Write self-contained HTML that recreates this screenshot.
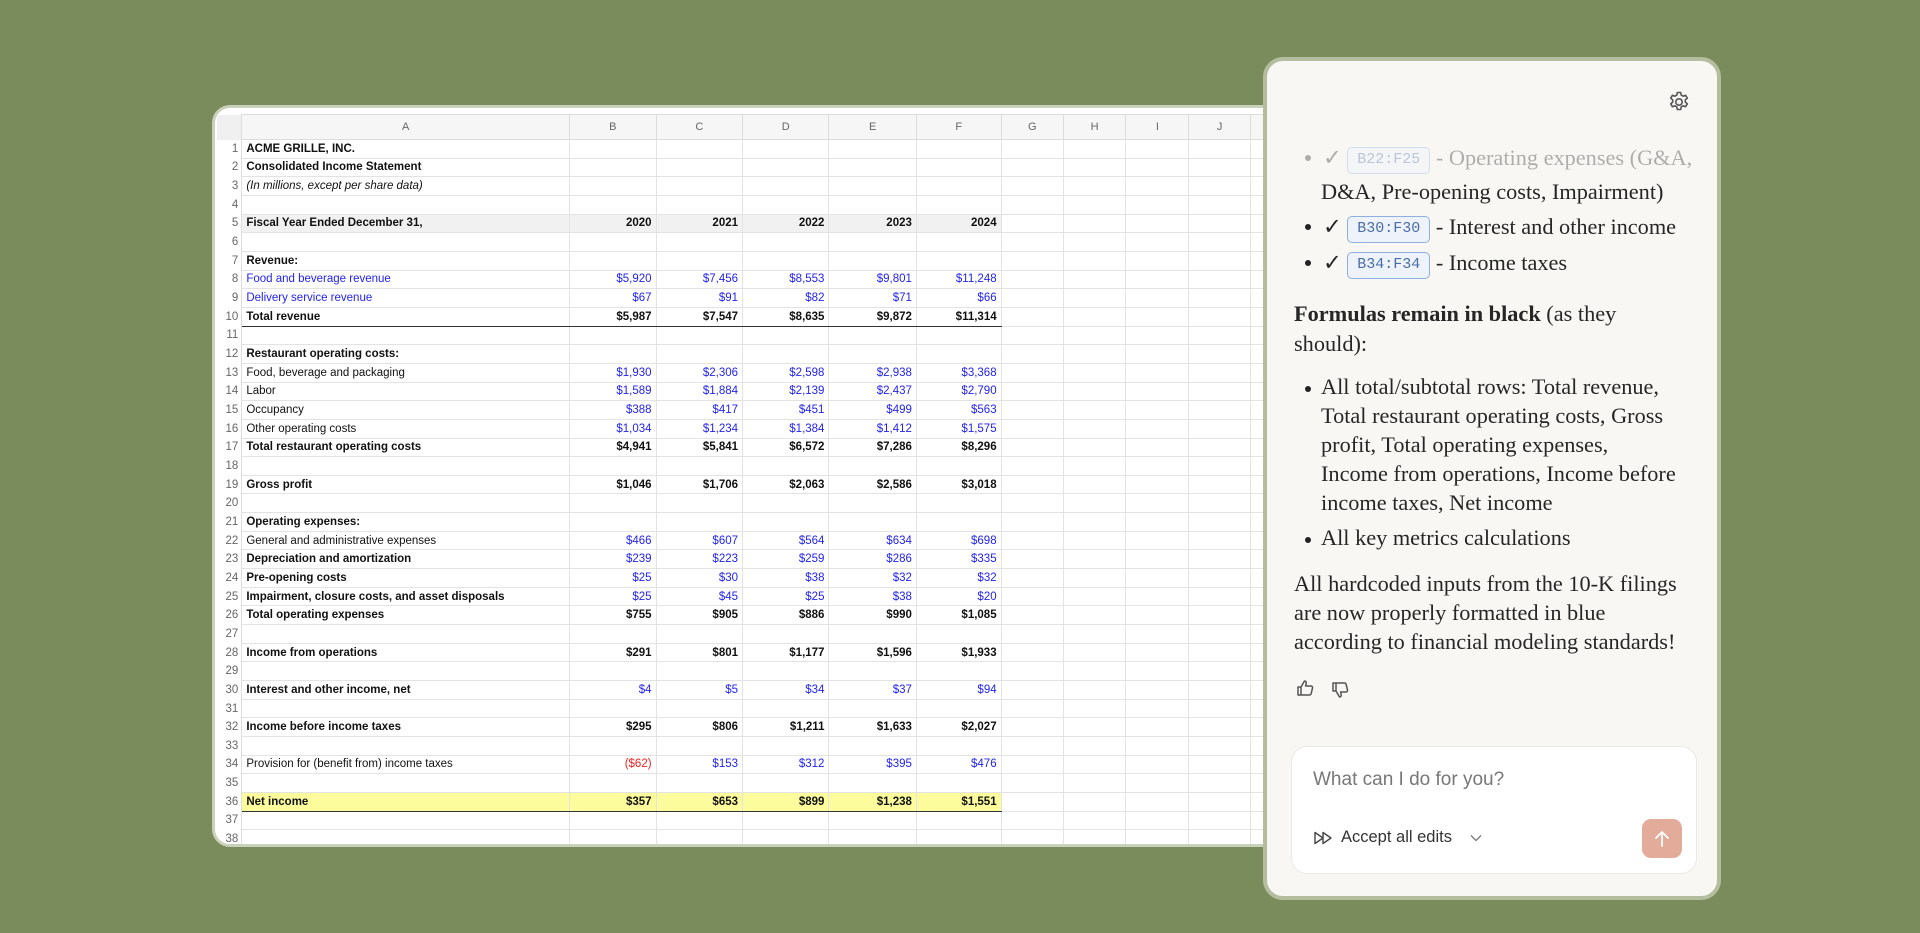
<!DOCTYPE html>
<html><head><meta charset="utf-8"><style>
*{box-sizing:border-box;margin:0;padding:0}
body{width:1920px;height:933px;background:#7b8c5c;position:relative;overflow:hidden;font-family:"Liberation Sans",sans-serif}
.card{position:absolute;left:212px;top:105px;width:1100px;height:742px;background:#fff;border-radius:18px;border:3px solid #c9d0bb;overflow:hidden}
table{position:absolute;left:2px;top:6px;border-collapse:collapse;table-layout:fixed;font-family:"Liberation Sans Narrow","Liberation Sans",sans-serif;font-size:11.5px;color:#111}
td{height:18.67px;border:1px solid #e3e3e3;padding:0 4px;white-space:nowrap;overflow:hidden;line-height:16px}
tr.h td{height:25px;background:#f6f6f6;color:#666;text-align:center;font-size:11px;border-color:#dcdcdc}
td.n{color:#666;text-align:right;padding-right:3px;background:#fff;border-left:none;border-top:none;border-bottom:none;border-right:1px solid #ddd}
td.v{text-align:right}
.b{font-weight:bold}.bl{color:#2323f0}.rd{color:#ee2222}
tr.g td:not(.n):nth-child(-n+7){background:#f1f1f1}
tr.u td:not(.n):nth-child(-n+7){border-bottom:1.5px solid #333}
tr.y td:not(.n):nth-child(-n+7){background:#fdfc9c;border-top:1.5px solid #333;border-bottom:1.5px solid #333}
.panel{position:absolute;left:1263px;top:57px;width:458px;height:843px;background:#f8f7f4;border-radius:20px;border:4px solid #b4be9f}
.s{position:absolute;font-family:"Liberation Serif",serif;font-size:22.3px;color:#262626;white-space:nowrap}
.chip{display:inline-block;font-family:"Liberation Mono",monospace;font-size:15px;color:#4a6da5;background:#eef3fb;border:1.5px solid #8fb0de;border-radius:5px;padding:0 9px;height:27px;line-height:24px;vertical-align:2px}
.dot{position:absolute;width:6px;height:6px;border-radius:3px;background:#222}
.inbox{position:absolute;left:24px;top:685px;width:406px;height:128px;background:#fff;border-radius:16px;border:1px solid #ebe9e4}
</style></head><body>
<div class="card">
<table>
<colgroup><col style="width:25px"><col style="width:330px"><col style="width:88px"><col style="width:88px"><col style="width:88px"><col style="width:89px"><col style="width:86px"><col style="width:64px"><col style="width:64px"><col style="width:65px"><col style="width:63px"><col style="width:60px"></colgroup>
<tr class="h"><td class="n" style="background:#f0f0f0"></td><td>A</td><td>B</td><td>C</td><td>D</td><td>E</td><td>F</td><td>G</td><td>H</td><td>I</td><td>J</td><td></td></tr>
<tr><td class="n">1</td><td class="b">ACME GRILLE, INC.</td><td></td><td></td><td></td><td></td><td></td><td></td><td></td><td></td><td></td><td></td></tr>
<tr><td class="n">2</td><td class="b">Consolidated Income Statement</td><td></td><td></td><td></td><td></td><td></td><td></td><td></td><td></td><td></td><td></td></tr>
<tr><td class="n">3</td><td><i>(In millions, except per share data)</i></td><td></td><td></td><td></td><td></td><td></td><td></td><td></td><td></td><td></td><td></td></tr>
<tr><td class="n">4</td><td></td><td></td><td></td><td></td><td></td><td></td><td></td><td></td><td></td><td></td><td></td></tr>
<tr class="g"><td class="n">5</td><td class="b">Fiscal Year Ended December 31,</td><td class="v b">2020</td><td class="v b">2021</td><td class="v b">2022</td><td class="v b">2023</td><td class="v b">2024</td><td></td><td></td><td></td><td></td><td></td></tr>
<tr><td class="n">6</td><td></td><td></td><td></td><td></td><td></td><td></td><td></td><td></td><td></td><td></td><td></td></tr>
<tr><td class="n">7</td><td class="b">Revenue:</td><td></td><td></td><td></td><td></td><td></td><td></td><td></td><td></td><td></td><td></td></tr>
<tr><td class="n">8</td><td class="bl">Food and beverage revenue</td><td class="v bl">$5,920</td><td class="v bl">$7,456</td><td class="v bl">$8,553</td><td class="v bl">$9,801</td><td class="v bl">$11,248</td><td></td><td></td><td></td><td></td><td></td></tr>
<tr><td class="n">9</td><td class="bl">Delivery service revenue</td><td class="v bl">$67</td><td class="v bl">$91</td><td class="v bl">$82</td><td class="v bl">$71</td><td class="v bl">$66</td><td></td><td></td><td></td><td></td><td></td></tr>
<tr class="u"><td class="n">10</td><td class="b">Total revenue</td><td class="v b">$5,987</td><td class="v b">$7,547</td><td class="v b">$8,635</td><td class="v b">$9,872</td><td class="v b">$11,314</td><td></td><td></td><td></td><td></td><td></td></tr>
<tr><td class="n">11</td><td></td><td></td><td></td><td></td><td></td><td></td><td></td><td></td><td></td><td></td><td></td></tr>
<tr><td class="n">12</td><td class="b">Restaurant operating costs:</td><td></td><td></td><td></td><td></td><td></td><td></td><td></td><td></td><td></td><td></td></tr>
<tr><td class="n">13</td><td>Food, beverage and packaging</td><td class="v bl">$1,930</td><td class="v bl">$2,306</td><td class="v bl">$2,598</td><td class="v bl">$2,938</td><td class="v bl">$3,368</td><td></td><td></td><td></td><td></td><td></td></tr>
<tr><td class="n">14</td><td>Labor</td><td class="v bl">$1,589</td><td class="v bl">$1,884</td><td class="v bl">$2,139</td><td class="v bl">$2,437</td><td class="v bl">$2,790</td><td></td><td></td><td></td><td></td><td></td></tr>
<tr><td class="n">15</td><td>Occupancy</td><td class="v bl">$388</td><td class="v bl">$417</td><td class="v bl">$451</td><td class="v bl">$499</td><td class="v bl">$563</td><td></td><td></td><td></td><td></td><td></td></tr>
<tr><td class="n">16</td><td>Other operating costs</td><td class="v bl">$1,034</td><td class="v bl">$1,234</td><td class="v bl">$1,384</td><td class="v bl">$1,412</td><td class="v bl">$1,575</td><td></td><td></td><td></td><td></td><td></td></tr>
<tr><td class="n">17</td><td class="b">Total restaurant operating costs</td><td class="v b">$4,941</td><td class="v b">$5,841</td><td class="v b">$6,572</td><td class="v b">$7,286</td><td class="v b">$8,296</td><td></td><td></td><td></td><td></td><td></td></tr>
<tr><td class="n">18</td><td></td><td></td><td></td><td></td><td></td><td></td><td></td><td></td><td></td><td></td><td></td></tr>
<tr><td class="n">19</td><td class="b">Gross profit</td><td class="v b">$1,046</td><td class="v b">$1,706</td><td class="v b">$2,063</td><td class="v b">$2,586</td><td class="v b">$3,018</td><td></td><td></td><td></td><td></td><td></td></tr>
<tr><td class="n">20</td><td></td><td></td><td></td><td></td><td></td><td></td><td></td><td></td><td></td><td></td><td></td></tr>
<tr><td class="n">21</td><td class="b">Operating expenses:</td><td></td><td></td><td></td><td></td><td></td><td></td><td></td><td></td><td></td><td></td></tr>
<tr><td class="n">22</td><td>General and administrative expenses</td><td class="v bl">$466</td><td class="v bl">$607</td><td class="v bl">$564</td><td class="v bl">$634</td><td class="v bl">$698</td><td></td><td></td><td></td><td></td><td></td></tr>
<tr><td class="n">23</td><td class="b">Depreciation and amortization</td><td class="v bl">$239</td><td class="v bl">$223</td><td class="v bl">$259</td><td class="v bl">$286</td><td class="v bl">$335</td><td></td><td></td><td></td><td></td><td></td></tr>
<tr><td class="n">24</td><td class="b">Pre-opening costs</td><td class="v bl">$25</td><td class="v bl">$30</td><td class="v bl">$38</td><td class="v bl">$32</td><td class="v bl">$32</td><td></td><td></td><td></td><td></td><td></td></tr>
<tr><td class="n">25</td><td class="b">Impairment, closure costs, and asset disposals</td><td class="v bl">$25</td><td class="v bl">$45</td><td class="v bl">$25</td><td class="v bl">$38</td><td class="v bl">$20</td><td></td><td></td><td></td><td></td><td></td></tr>
<tr><td class="n">26</td><td class="b">Total operating expenses</td><td class="v b">$755</td><td class="v b">$905</td><td class="v b">$886</td><td class="v b">$990</td><td class="v b">$1,085</td><td></td><td></td><td></td><td></td><td></td></tr>
<tr><td class="n">27</td><td></td><td></td><td></td><td></td><td></td><td></td><td></td><td></td><td></td><td></td><td></td></tr>
<tr><td class="n">28</td><td class="b">Income from operations</td><td class="v b">$291</td><td class="v b">$801</td><td class="v b">$1,177</td><td class="v b">$1,596</td><td class="v b">$1,933</td><td></td><td></td><td></td><td></td><td></td></tr>
<tr><td class="n">29</td><td></td><td></td><td></td><td></td><td></td><td></td><td></td><td></td><td></td><td></td><td></td></tr>
<tr><td class="n">30</td><td class="b">Interest and other income, net</td><td class="v bl">$4</td><td class="v bl">$5</td><td class="v bl">$34</td><td class="v bl">$37</td><td class="v bl">$94</td><td></td><td></td><td></td><td></td><td></td></tr>
<tr><td class="n">31</td><td></td><td></td><td></td><td></td><td></td><td></td><td></td><td></td><td></td><td></td><td></td></tr>
<tr><td class="n">32</td><td class="b">Income before income taxes</td><td class="v b">$295</td><td class="v b">$806</td><td class="v b">$1,211</td><td class="v b">$1,633</td><td class="v b">$2,027</td><td></td><td></td><td></td><td></td><td></td></tr>
<tr><td class="n">33</td><td></td><td></td><td></td><td></td><td></td><td></td><td></td><td></td><td></td><td></td><td></td></tr>
<tr><td class="n">34</td><td>Provision for (benefit from) income taxes</td><td class="v rd">($62)</td><td class="v bl">$153</td><td class="v bl">$312</td><td class="v bl">$395</td><td class="v bl">$476</td><td></td><td></td><td></td><td></td><td></td></tr>
<tr><td class="n">35</td><td></td><td></td><td></td><td></td><td></td><td></td><td></td><td></td><td></td><td></td><td></td></tr>
<tr class="y"><td class="n">36</td><td class="b">Net income</td><td class="v b">$357</td><td class="v b">$653</td><td class="v b">$899</td><td class="v b">$1,238</td><td class="v b">$1,551</td><td></td><td></td><td></td><td></td><td></td></tr>
<tr><td class="n">37</td><td></td><td></td><td></td><td></td><td></td><td></td><td></td><td></td><td></td><td></td><td></td></tr>
<tr><td class="n">38</td><td></td><td></td><td></td><td></td><td></td><td></td><td></td><td></td><td></td><td></td><td></td></tr>
</table>
</div>

<div class="panel">
<svg style="position:absolute;left:400px;top:29px" width="24" height="24" viewBox="0 0 24 24" fill="none" stroke="#555" stroke-width="1.6"><circle cx="12" cy="12" r="3.2"/><path d="M10.3 2.5h3.4l.5 2.6 1.9 1.1 2.5-.9 1.7 2.9-2 1.7v2.2l2 1.7-1.7 2.9-2.5-.9-1.9 1.1-.5 2.6h-3.4l-.5-2.6-1.9-1.1-2.5.9-1.7-2.9 2-1.7v-2.2l-2-1.7 1.7-2.9 2.5.9 1.9-1.1z" stroke-linejoin="round"/></svg>

<div class="s" style="left:38px;top:84px;opacity:.35"><span class="dot" style="position:relative;display:inline-block;top:-4px;margin-right:12px"></span>✓ <span class="chip">B22:F25</span> - Operating expenses (G&amp;A,</div>
<div class="s" style="left:54px;top:118px">D&amp;A, Pre-opening costs, Impairment)</div>
<div class="s" style="left:38px;top:153px"><span class="dot" style="position:relative;display:inline-block;top:-4px;margin-right:12px"></span>✓ <span class="chip">B30:F30</span> - Interest and other income</div>
<div class="s" style="left:38px;top:189px"><span class="dot" style="position:relative;display:inline-block;top:-4px;margin-right:12px"></span>✓ <span class="chip">B34:F34</span> - Income taxes</div>

<div class="s" style="left:27px;top:240px"><b>Formulas remain in black</b> (as they</div>
<div class="s" style="left:27px;top:270px">should):</div>

<div class="dot" style="left:38px;top:325px"></div>
<div class="s" style="left:54px;top:313px">All total/subtotal rows: Total revenue,</div>
<div class="s" style="left:54px;top:342px">Total restaurant operating costs, Gross</div>
<div class="s" style="left:54px;top:371px">profit, Total operating expenses,</div>
<div class="s" style="left:54px;top:400px">Income from operations, Income before</div>
<div class="s" style="left:54px;top:429px">income taxes, Net income</div>
<div class="dot" style="left:38px;top:476px"></div>
<div class="s" style="left:54px;top:464px">All key metrics calculations</div>

<div class="s" style="left:27px;top:510px">All hardcoded inputs from the 10-K filings</div>
<div class="s" style="left:27px;top:539px">are now properly formatted in blue</div>
<div class="s" style="left:27px;top:568px">according to financial modeling standards!</div>

<svg style="position:absolute;left:28px;top:617px" width="20" height="20" viewBox="0 0 20 20" fill="none" stroke="#555" stroke-width="1.5" stroke-linejoin="round"><path d="M3 9h3v8H3zM6 9l3.5-6c1.3 0 2 1 1.7 2.3L10.6 8H16c1 0 1.7.9 1.5 1.9l-1.3 5.6c-.2.9-1 1.5-1.9 1.5H6"/></svg>
<svg style="position:absolute;left:63px;top:619px" width="20" height="20" viewBox="0 0 20 20" fill="none" stroke="#555" stroke-width="1.5" stroke-linejoin="round"><path d="M3 3h3v8H3zM6 11l3.5 6c1.3 0 2-1 1.7-2.3L10.6 12H16c1 0 1.7-.9 1.5-1.9l-1.3-5.6C16 3.6 15.2 3 14.3 3H6"/></svg>

<div class="inbox">
<div style="position:absolute;left:21px;top:22px;font-size:19px;color:#777">What can I do for you?</div>
<svg style="position:absolute;left:22px;top:84px" width="22" height="14" viewBox="0 0 22 14" fill="none" stroke="#444" stroke-width="1.4" stroke-linejoin="round"><path d="M1 1.5v11L9 7zM9 1.5v11L17 7z"/></svg>
<div style="position:absolute;left:49px;top:81px;font-size:16.5px;color:#333">Accept all edits</div>
<svg style="position:absolute;left:178px;top:87px" width="12" height="8" viewBox="0 0 12 8" fill="none" stroke="#777" stroke-width="1.3"><path d="M1 1.5l5 5 5-5"/></svg>
<div style="position:absolute;left:350px;top:72px;width:40px;height:39px;border-radius:9px;background:#e2ab9a"></div>
<svg style="position:absolute;left:359px;top:81px" width="22" height="22" viewBox="0 0 22 22" fill="none" stroke="#fff" stroke-width="1.8" stroke-linecap="round" stroke-linejoin="round"><path d="M11 18V4M5 10l6-6 6 6"/></svg>
</div>
</div>
</body></html>
